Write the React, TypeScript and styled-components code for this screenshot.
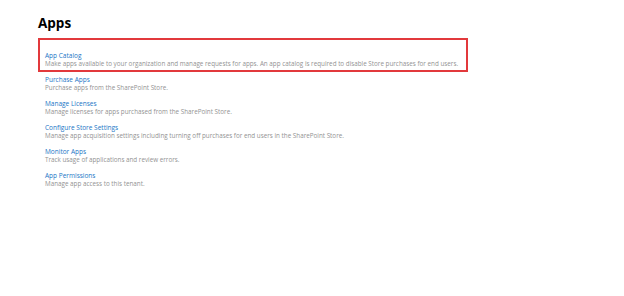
import styled, { createGlobalStyle } from "styled-components";

const GlobalStyle = createGlobalStyle`
    body {
        margin: 0;
        background: #fff;
        font-family: "Open Sans", "Noto Sans", sans-serif;
    }
`

const Details = {
    Title: "Apps",
    Items: [
        {
            Name: "App Catalog",
            Text: "Make apps available to your organization and manage requests for apps. An app catalog is required to disable Store purchases for end users.",
            Marked: true,
        },
        {
            Name: "Purchase Apps",
            Text: "Purchase apps from the SharePoint Store.",
        },
        {
            Name: "Manage Licenses",
            Text: "Manage licenses for apps purchased from the SharePoint Store.",
        },
        {
            Name: "Configure Store Settings",
            Text: "Manage app acquisition settings including turning off purchases for end users in the SharePoint Store.",
        },
        {
            Name: "Monitor Apps",
            Text: "Track usage of applications and review errors.",
        },
        {
            Name: "App Permissions",
            Text: "Manage app access to this tenant.",
        },
    ],
}

const StyledPage = styled.main`
    width: 624px;
    height: 296px;
    padding: 16px 0 0 38px;
    box-sizing: border-box;
`

const StyledTitle = styled.h1`
    margin: 0 0 7px 0;
    font-size: 13.5px;
    line-height: 15px;
    font-weight: 700;
    color: #000;
`

const StyledList = styled.ul`
    list-style: none;
    margin: 0;
    padding: 0;
    display: flex;
    flex-direction: column;
    gap: 8px;
`

const StyledItem = styled.li<{ $marked?: boolean }>`
    display: flex;
    flex-direction: column;
    width: ${(p) => (p.$marked ? "421px" : "auto")};
    padding: ${(p) => (p.$marked ? "12px 0 2px 5px" : "0 0 0 7px")};
    border: ${(p) => (p.$marked ? "2px solid #e2393c" : "none")};
    margin-bottom: ${(p) => (p.$marked ? "-4px" : "0")};
`

const StyledLink = styled.a`
    color: #1a76c6;
    font-size: 6.5px;
    line-height: 8px;
    text-decoration: none;
    white-space: nowrap;
`

const StyledText = styled.span`
    color: #939393;
    font-size: 6.3px;
    line-height: 8px;
    white-space: nowrap;
`

export default function App() {
    return (
        <StyledPage>
            <GlobalStyle />
            <StyledTitle>{Details.Title}</StyledTitle>
            <StyledList>
                {Details.Items.map((item, index) => (
                    <StyledItem key={index} $marked={item.Marked}>
                        <StyledLink href="#">{item.Name}</StyledLink>
                        <StyledText>{item.Text}</StyledText>
                    </StyledItem>
                ))}
            </StyledList>
        </StyledPage>
    );
}
